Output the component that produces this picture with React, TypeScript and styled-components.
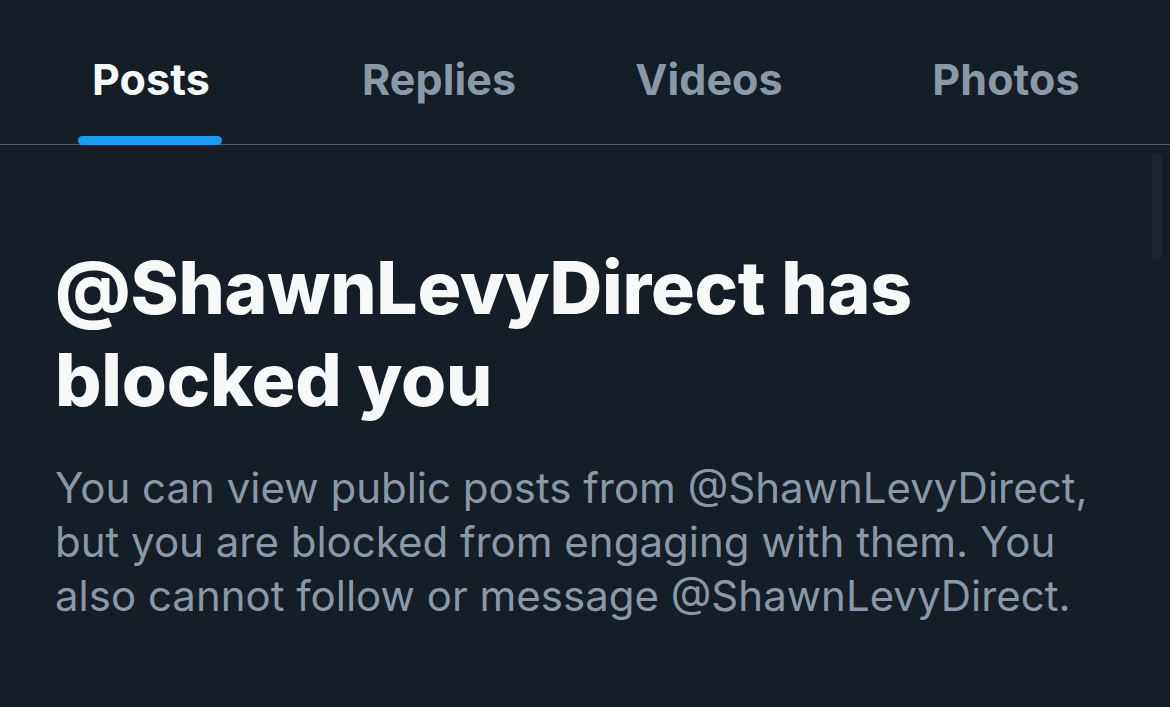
import styled, { createGlobalStyle } from "styled-components";

const GlobalStyle = createGlobalStyle`
  html, body {
    margin: 0;
    padding: 0;
    background: #151d27;
  }
  body {
    font-family: Inter, "Liberation Sans", Arial, sans-serif;
    -webkit-font-smoothing: antialiased;
  }
`;

const tabs = ["Posts", "Replies", "Videos", "Photos"];

const App: React.FC = () => {
  return (
    <Page>
      <GlobalStyle />
      <TabBar>
        {tabs.map((t, i) => (
          <Tab key={t} $active={i === 0}>
            {t}
            {i === 0 && <Indicator />}
          </Tab>
        ))}
      </TabBar>
      <Content>
        <Heading>@ShawnLevyDirect has blocked you</Heading>
        <Message>
          You can view public posts from @ShawnLevyDirect, but you are blocked
          from engaging with them. You also cannot follow or message
          @ShawnLevyDirect.
        </Message>
      </Content>
      <ScrollThumb />
    </Page>
  );
};

export default App;

const Page = styled.div`
  position: relative;
  width: 1170px;
  height: 707px;
  overflow: hidden;
  background: #151d27;
`;

const TabBar = styled.nav`
  display: grid;
  grid-template-columns: 300px 276px 264px 1fr;
  height: 144px;
  border-bottom: 1px solid #55606b;
`;

const Tab = styled.div<{ $active?: boolean }>`
  position: relative;
  display: flex;
  align-items: center;
  justify-content: center;
  padding-top: 14px;
  padding-left: 2px;
  font-size: 43px;
  font-weight: 700;
  letter-spacing: 0.1px;
  color: ${(p) => (p.$active ? "#f7f9f9" : "#8b98a5")};
`;

const Indicator = styled.span`
  position: absolute;
  bottom: -1px;
  left: 50%;
  width: 144px;
  height: 9px;
  margin-left: -72px;
  border-radius: 5px;
  background: #1d9bf0;
`;

const Content = styled.div`
  padding: 97px 55px 0 55px;
`;

const Heading = styled.h1`
  margin: 0;
  font-size: 73px;
  line-height: 92px;
  font-weight: 800;
  letter-spacing: -0.2px;
  color: #f7f9f9;
`;

const Message = styled.p`
  margin: 35px 0 0 0;
  font-size: 42px;
  line-height: 54px;
  font-weight: 400;
  color: #8b98a5;
`;

const ScrollThumb = styled.div`
  position: absolute;
  top: 153px;
  right: 8px;
  width: 10px;
  height: 107px;
  border-radius: 5px;
  background: #1c2530;
`;
